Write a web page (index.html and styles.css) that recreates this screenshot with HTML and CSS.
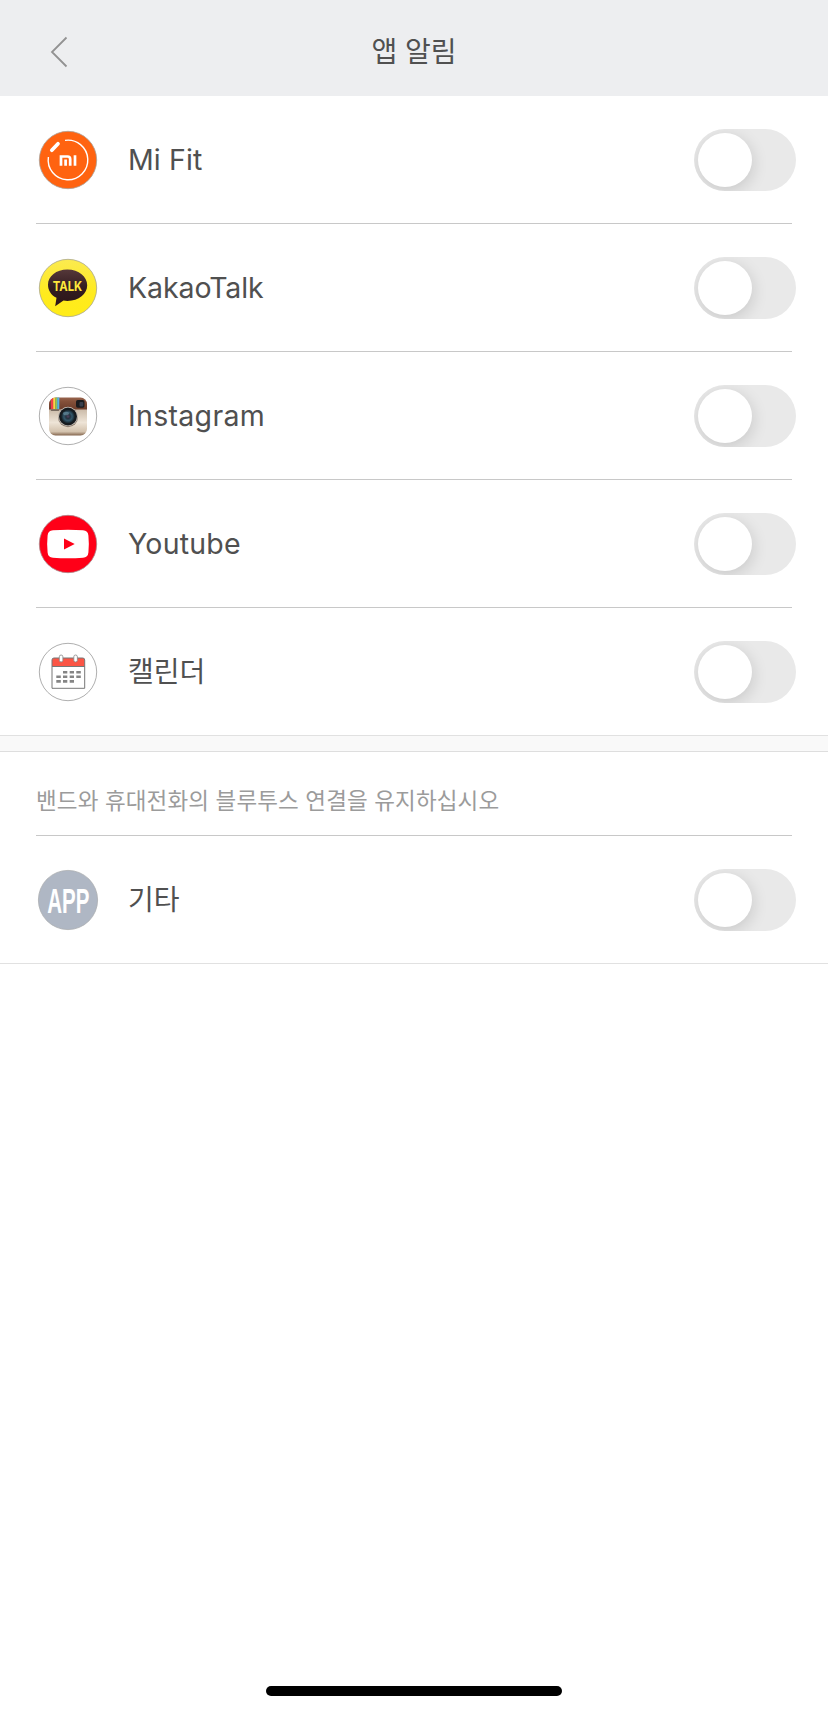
FILE: index.html
```html
<!DOCTYPE html>
<html lang="ko">
<head>
<meta charset="utf-8">
<title>앱 알림</title>
<link rel="stylesheet" href="styles.css">
</head>
<body>
<div class="screen">
  <header class="header">
    <svg class="back" viewBox="0 0 18 32"><path d="M16.500 1.500L2 16l14.500 14.500"/></svg>
    <h1 class="title">앱 알림</h1>
  </header>
  <main>
    <ul class="list">
      <li class="row">
        <svg class="icon" viewBox="-30 -30 60 60">
          <circle r="28.700" fill="#ff6310" stroke="#aaa097" stroke-width=".8"/>
          <path d="M-3-19.600A19.800 19.800 0 1 1-19.600-3" fill="none" stroke="#fff" stroke-width="1.400"/>
          <path d="M-16.200-9.800l6.200-6.400" stroke="#fff" stroke-width="3.700" stroke-linecap="round"/>
          <path d="M-7 5.700V-3.500H-.5Q2.200-3.500 2.200-.8V5.700M-2.400-.5V5.700M7-4.800V5.700" fill="none" stroke="#fff" stroke-width="2.700"/>
        </svg>
        <span class="name mifit">Mi Fit</span><span class="toggle"></span>
      </li>
      <li class="row">
        <svg class="icon" viewBox="-30 -30 60 60">
          <defs>
            <linearGradient id="yellow" x1="0" y1="0" x2="0" y2="1"><stop offset="0" stop-color="#fbea50"/><stop offset=".6" stop-color="#ffeb1e"/><stop offset="1" stop-color="#ffec18"/></linearGradient>
            <linearGradient id="bubble" x1="0" y1="0" x2="0" y2="1"><stop offset="0" stop-color="#55383a"/><stop offset=".5" stop-color="#341d20"/><stop offset="1" stop-color="#2b1518"/></linearGradient>
          </defs>
          <circle r="28.700" fill="url(#yellow)" stroke="#aaa78c" stroke-width=".8"/>
          <path d="M-.6-18.500C-11.800-18.500-20-11.800-20-3.300-20 2.300-17 7-11.500 9.800L-12.800 18.300-4.500 12.600Q-2.600 12.900-.6 12.900C10.900 12.900 19.200 6 19.200-2.700S10.900-18.500-.6-18.500Z" fill="url(#bubble)"/>
          <text class="talk" x="-.6" y="3" textLength="29.500" lengthAdjust="spacingAndGlyphs">TALK</text>
        </svg>
        <span class="name kakao">KakaoTalk</span><span class="toggle"></span>
      </li>
      <li class="row">
        <svg class="icon" viewBox="-30 -30 60 60">
          <defs>
            <clipPath id="camera"><rect x="-19" y="-18.500" width="38" height="38" rx="6.500"/></clipPath>
            <linearGradient id="leather" x1="0" y1="0" x2="0" y2="1"><stop offset="0" stop-color="#9a6650"/><stop offset=".35" stop-color="#845039"/><stop offset="1" stop-color="#6c3d2b"/></linearGradient>
            <linearGradient id="cream" x1="0" y1="0" x2="0" y2="1"><stop offset="0" stop-color="#c9b9a7"/><stop offset=".5" stop-color="#eee4d7"/><stop offset=".84" stop-color="#d3c2ad"/><stop offset="1" stop-color="#78583f"/></linearGradient>
            <radialGradient id="glass"><stop offset="0" stop-color="#57405f"/><stop offset=".3" stop-color="#24333f"/><stop offset=".58" stop-color="#33576b"/><stop offset="1" stop-color="#11191e"/></radialGradient>
          </defs>
          <circle r="28.700" fill="#fff" stroke="#999" stroke-width=".8"/>
          <g clip-path="url(#camera)">
            <path fill="url(#cream)" d="M-19-7h38v27h-38z"/>
            <path fill="url(#leather)" d="M-19-19h38V-6.500h-38z"/>
            <path fill="#f0404a" d="M-17-19h2.200v12h-2.200z"/><path fill="#ffd045" d="M-14.800-19h2.200v12h-2.200z"/><path fill="#86c95c" d="M-12.600-19h1.800v12h-1.800z"/><path fill="#56b4e4" d="M-10.800-19h2.100v12h-2.100z"/>
            <path d="M-16.500-5.700h7" stroke="#776b60" stroke-width="1.600" stroke-linecap="round"/>
          </g>
          <rect x="8" y="-16" width="8.500" height="7.800" rx="1.800" fill="#1a1b1e"/><rect x="11.500" y="-14" width="3.800" height="4.500" rx="1" fill="#39404d"/>
          <circle cy="1.200" r="10" fill="#8b7b6e"/><circle cy=".5" r="9.700" fill="#cec9c2"/><circle cy=".5" r="9" fill="#171a1e"/><circle cy=".5" r="7.100" fill="url(#glass)"/><ellipse cx="-2" cy="-2.500" rx="3" ry="1.800" fill="#6f96a6" opacity=".6"/>
        </svg>
        <span class="name insta">Instagram</span><span class="toggle"></span>
      </li>
      <li class="row">
        <svg class="icon" viewBox="-30 -30 60 60">
          <circle r="28.700" fill="#ff0018" stroke="#aa8589" stroke-width=".8"/>
          <path d="M-15-13.700Q0-14.800 15-13.700Q20-13.400 20.400-8.500Q21.300 0 20.400 8.500Q20 13.400 15 13.700Q0 14.800-15 13.700Q-20 13.400-20.400 8.500Q-21.300 0-20.400-8.500Q-20-13.400-15-13.700Z" fill="#fff"/>
          <path d="M-4-5.500L6.700 0-4 5.500Z" fill="#ff0018"/>
        </svg>
        <span class="name youtube">Youtube</span><span class="toggle"></span>
      </li>
      <li class="row row-last">
        <svg class="icon" viewBox="-30 -30 60 60">
          <circle r="28.700" fill="#fff" stroke="#999" stroke-width=".8"/>
          <path d="M-16-5.500v-6.700Q-16-14-14-14H14.700Q16.700-14 16.700-12.200v6.700Z" fill="#fb5545"/>
          <path d="M-16 16.300V-12Q-16-14-14-14H14.700Q16.700-14 16.700-12V16.300ZM-16-5.500H16.700" fill="none" stroke="#777" stroke-width="1"/>
          <rect x="-8.700" y="-17" width="3.600" height="7" rx="1.800" fill="#fff" stroke="#888" stroke-width=".8"/>
          <rect x="5.800" y="-17" width="3.600" height="7" rx="1.800" fill="#fff" stroke="#888" stroke-width=".8"/>
          <path d="M-5 .3H-.7M1.700.3H6M8.300.3h4.500M-11.700 4.800h4.500M-5 4.800H-.7M1.700 4.800H6M8.300 4.800h4.500M-11.700 9.400h4.500M-5 9.400H-.7M1.700 9.400H6" stroke="#858585" stroke-width="2.600"/>
        </svg>
        <span class="name calendar">캘린더</span><span class="toggle"></span>
      </li>
    </ul>
    <div class="gap"></div>
    <p class="note">밴드와 휴대전화의 블루투스 연결을 유지하십시오</p>
    <div class="row row-last">
      <svg class="icon" viewBox="-30 -30 60 60">
        <circle r="29.600" fill="#afb7c4" stroke="#abadb0" stroke-width=".8"/>
        <text class="app" transform="translate(.4 13) scale(.57 1)">APP</text>
      </svg>
      <span class="name etc">기타</span><span class="toggle"></span>
    </div>
  </main>
  <div class="home"></div>
</div>
</body>
</html>
```

FILE: styles.css
```css
* { box-sizing: border-box; }
body { margin: 0; background: #fff; color: #505050; font-family: Inter, "Noto Sans CJK KR", sans-serif; }
.screen { min-height: 1711px; display: flex; flex-direction: column; }
.header { height: 96px; padding: 8px 50px 0; background: #edeef0; display: grid; grid-template-columns: 18px 1fr 18px; align-items: center; }
.back { width: 18px; height: 32px; fill: none; stroke: #929292; stroke-width: 1.8; }
.title { margin: 0; text-align: center; font-size: 28px; line-height: 40px; font-weight: 400; }
.list { margin: 0; padding: 0; list-style: none; }
.row { height: 128px; padding: 0 32px 0 38px; display: flex; align-items: center; background: linear-gradient(#c8c8c8, #c8c8c8) 36px 127px / 756px 1px no-repeat; }
.row-last { background: linear-gradient(#e1e1e1, #e1e1e1) 0 127px / 100% 1px no-repeat; }
.icon { width: 60px; height: 60px; flex: none; overflow: visible; }
.name { margin-left: 30px; font-size: 28.500px; line-height: 40px; white-space: nowrap; }
.mifit { letter-spacing: .1px; }
.kakao { letter-spacing: -.1px; }
.insta { letter-spacing: .32px; }
.youtube { letter-spacing: .2px; }
.calendar, .etc { font-size: 28px; }
.toggle { width: 102px; height: 62px; margin-left: auto; padding: 4px; border-radius: 31px; background: #e9e9e9; overflow: hidden; }
.toggle::before { content: ""; display: block; width: 54px; height: 54px; border-radius: 50%; background: #fff; box-shadow: 1px 4px 16px rgba(0, 0, 0, .14); }
.gap { height: 16px; background: #f9f9f9; border-bottom: 1px solid #dedede; }
.note { height: 84px; margin: 0; padding-left: 36px; padding-top: 13px; display: flex; align-items: center; color: #9b9b9b; font-size: 22.500px; letter-spacing: .13px; line-height: 32px; background: linear-gradient(#c8c8c8, #c8c8c8) 36px 83px / 756px 1px no-repeat; }
.talk { font: 700 13.5px Inter, sans-serif; fill: #ffe83c; text-anchor: middle; }
.app { font: 700 36px "Liberation Sans", sans-serif; fill: #fff; text-anchor: middle; }
.home { width: 296px; height: 10px; margin: auto auto 15px; border-radius: 5px; background: #000; }
```
